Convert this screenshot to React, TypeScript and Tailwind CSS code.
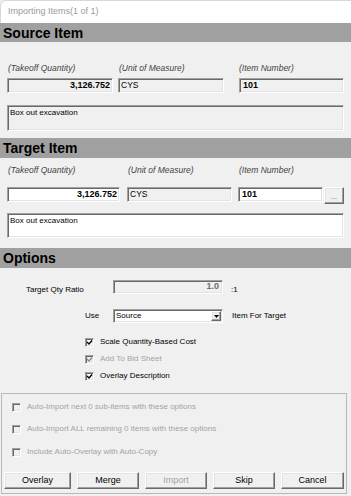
import React from "react";

const sunken =
  "border border-t-[#a0a0a0] border-l-[#a0a0a0] border-b-white border-r-white shadow-[inset_1px_1px_0_#696969,inset_-1px_-1px_0_#e3e3e3]";

const raised =
  "bg-[#f0f0f0] border border-t-white border-l-white border-b-[#696969] border-r-[#696969] shadow-[inset_-1px_-1px_0_#a0a0a0,inset_1px_1px_0_#e3e3e3]";

interface BoxProps {
  checked?: boolean;
  disabled?: boolean;
  label: string;
}

const CheckBox: React.FC<BoxProps> = ({ checked, disabled, label }) => {
  return (
    <div className="flex items-center gap-[6px] h-[10px]">
      <div
        className={`w-[9px] h-[9px] flex items-center justify-center ${sunken} ${
          disabled ? "bg-[#f0f0f0]" : "bg-white"
        }`}
      >
        {checked && (
          <svg width="7" height="7" viewBox="0 0 7 7">
            <path
              d="M1 3 L3 5 L6 1.5"
              fill="none"
              stroke={disabled ? "#8a8a8a" : "#000"}
              strokeWidth="1.4"
            />
          </svg>
        )}
      </div>
      <span
        className={`text-[8px] leading-none ${
          disabled ? "text-[#a3a3a3]" : "text-black"
        }`}
      >
        {label}
      </span>
    </div>
  );
};

const Header: React.FC<{ title: string; h: string }> = ({ title, h }) => (
  <div
    className={`${h} bg-[#a0a0a0] pl-[3px] flex items-center text-[14px] font-bold text-black leading-none`}
  >
    {title}
  </div>
);

const Btn: React.FC<{ label: string; w: string; disabled?: boolean }> = ({
  label,
  w,
  disabled,
}) => (
  <div
    className={`${w} h-[17px] ${raised} flex items-center justify-center text-[9px] ${
      disabled ? "text-[#a3a3a3]" : "text-black"
    }`}
  >
    {label}
  </div>
);

export default function App() {
  return (
    <div className="w-[351px] h-[496px] bg-[#f0f0f0] overflow-hidden font-['Liberation_Sans',Arial,sans-serif] text-black">
      {/* title bar */}
      <div className="h-[23px] bg-white rounded-tl-[6px] border-t border-l border-[#d8d8d8] flex items-center pl-[7px] text-[9px] text-[#9a9a9a]">
        Importing Items(1 of 1)
      </div>

      {/* source */}
      <Header title="Source Item" h="h-[19px]" />
      <div className="h-[95px] px-[7px] pt-[22px]">
        <div className="flex text-[8.5px] italic text-[#444] leading-none h-[10px]">
          <span className="w-[111px] pl-[1px]">(Takeoff Quantity)</span>
          <span className="w-[121px] pl-[1px]">(Unit of Measure)</span>
          <span>(Item Number)</span>
        </div>
        <div className="flex gap-[5px] mt-[4px]">
          <div
            className={`w-[106px] h-[15px] ${sunken} bg-[#f0f0f0] flex items-center justify-end pr-[2px] text-[9px] font-bold`}
          >
            3,126.752
          </div>
          <div
            className={`w-[106px] h-[15px] ${sunken} bg-[#f0f0f0] flex items-center pl-[2px] text-[8.5px]`}
          >
            CYS
          </div>
          <div
            className={`w-[105px] h-[15px] ml-[10px] ${sunken} bg-[#f0f0f0] flex items-center pl-[3px] text-[9px] font-bold`}
          >
            101
          </div>
        </div>
        <div
          className={`mt-[12px] w-[337px] h-[26px] ${sunken} bg-[#f0f0f0] pl-[2px] pt-[3px] text-[8px] leading-none`}
        >
          Box out excavation
        </div>
      </div>

      {/* target */}
      <div className="h-[1px] bg-[#f0f0f0]" />
      <Header title="Target Item" h="h-[20px]" />
      <div className="h-[90px] px-[7px] pt-[8px]">
        <div className="flex text-[8.5px] italic text-[#444] leading-none h-[10px]">
          <span className="w-[121px] pl-[1px]">(Takeoff Quantity)</span>
          <span className="w-[111px]">(Unit of Measure)</span>
          <span>(Item Number)</span>
        </div>
        <div className="flex items-start mt-[11px]">
          <div
            className={`w-[113px] h-[15px] ${sunken} bg-white flex items-center justify-end pr-[2px] text-[9px] font-bold`}
          >
            3,126.752
          </div>
          <div
            className={`w-[105px] h-[15px] ml-[7px] ${sunken} bg-[#f0f0f0] flex items-center pl-[2px] text-[8.5px]`}
          >
            CYS
          </div>
          <div
            className={`w-[85px] h-[15px] ml-[6px] ${sunken} bg-white flex items-center pl-[3px] text-[9px] font-bold`}
          >
            101
          </div>
          <div
            className={`w-[20px] h-[17px] ml-[1px] ${raised} flex items-end justify-center pb-[3px] text-[7px] leading-none text-[#555]`}
          >
            ...
          </div>
        </div>
        <div
          className={`mt-[9px] w-[337px] h-[25px] ${sunken} bg-white pl-[2px] pt-[3px] text-[8px] leading-none`}
        >
          Box out excavation
        </div>
      </div>

      {/* options */}
      <Header title="Options" h="h-[20px]" />
      <div className="h-[125px] pt-[12px]">
        <div className="flex items-center h-[14px]">
          <span className="w-[113px] pl-[26px] text-[8px] leading-none mt-[6px]">
            Target Qty Ratio
          </span>
          <div
            className={`w-[110px] h-[14px] ${sunken} bg-[#f0f0f0] flex items-center justify-end pr-[3px] text-[9px] font-bold text-[#6d6d6d]`}
          >
            1.0
          </div>
          <span className="ml-[8px] text-[8px] leading-none mt-[6px]">:1</span>
        </div>
        <div className="flex items-center h-[14px] mt-[15px]">
          <span className="w-[113px] pl-[85px] text-[8px] leading-none">Use</span>
          <div
            className={`w-[110px] h-[14px] ${sunken} bg-white flex items-center justify-between pl-[2px] pr-[1px] text-[8px]`}
          >
            <span>Source</span>
            <div className={`w-[10px] h-[10px] ${raised} flex items-center justify-center`}>
              <svg width="5" height="3" viewBox="0 0 5 3">
                <path d="M0 0 L5 0 L2.5 3 Z" fill="#000" />
              </svg>
            </div>
          </div>
          <span className="ml-[9px] text-[8px] leading-none">Item For Target</span>
        </div>
        <div className="flex flex-col gap-[7px] pl-[85px] mt-[14px]">
          <CheckBox checked label="Scale Quantity-Based Cost" />
          <CheckBox checked disabled label="Add To Bid Sheet" />
          <CheckBox checked label="Overlay Description" />
        </div>
      </div>

      {/* auto import box */}
      <div className="ml-[1px] mr-[4px] h-[101px] border border-[#b9b9b9] pt-[8px] px-[2px]">
        <div className="flex flex-col pl-[8px]">
          <CheckBox disabled label="Auto-Import next 0 sub-items with these options" />
          <div className="h-[12px]" />
          <CheckBox disabled label="Auto-Import ALL remaining 0 items with these options" />
          <div className="h-[13px]" />
          <CheckBox disabled label="Include Auto-Overlay with Auto-Copy" />
        </div>
        <div className="flex gap-[6px] mt-[15px]">
          <Btn label="Overlay" w="w-[67px]" />
          <Btn label="Merge" w="w-[62px]" />
          <Btn label="Import" w="w-[62px]" disabled />
          <Btn label="Skip" w="w-[62px]" />
          <Btn label="Cancel" w="w-[63px]" />
        </div>
      </div>
    </div>
  );
}
